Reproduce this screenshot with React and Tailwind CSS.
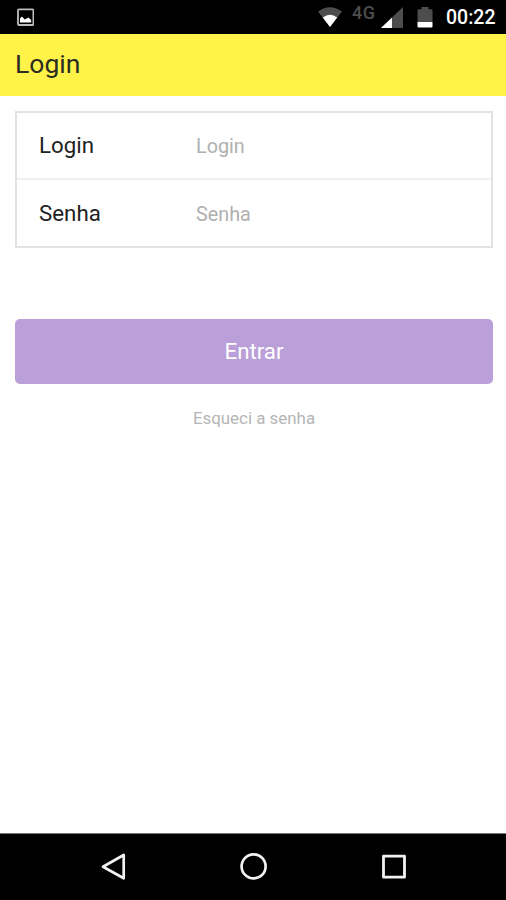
import { useState } from "react";

const fields = [
  { name: "login", label: "Login", type: "text" },
  { name: "senha", label: "Senha", type: "password" },
];

function StatusBar() {
  return (
    <div className="flex h-[34px] shrink-0 items-center bg-black pl-[17px] pr-[10.5px]">
      <svg className="h-[18px] w-[17px]" viewBox="0 0 17 18">
        <rect x="1" y="1.4" width="15.4" height="15.6" rx="1" fill="none" stroke="#bdbdbd" strokeWidth="1.8" />
        <path d="M3 14.6V10.6L5 8.6l2.7 2.8L11.4 9.6l2.8 2.4v2.6z" fill="#fff" />
      </svg>

      <svg className="ml-auto h-5 w-6" viewBox="0 0 24 20">
        <path d="M0 4.5Q12-4 24 4.5L12 20z" fill="#4d4d4d" />
        <path d="M4.8 10.4Q12 5 19.2 10.4L12 20z" fill="#fff" />
      </svg>

      <span className="ml-[10px] w-6 -translate-y-1 text-[18px] font-medium leading-none tracking-[0.5px] text-[#4d4d4d]">
        4G
      </span>

      <svg className="ml-[5px] h-[21px] w-[22px]" viewBox="0 0 22 21">
        <path d="M0 21L22 0V21z" fill="#4d4d4d" />
        <path d="M0 21L11 10.5V21z" fill="#fff" />
      </svg>

      <svg className="ml-[14px] h-[21px] w-4" viewBox="0 0 16 21">
        <path d="M.5 3.5Q.5 2.3 1.7 2.3H4.5V0h7v2.3h2.8q1.2 0 1.2 1.2V15H.5z" fill="#4d4d4d" />
        <path d="M.5 15h15v4.5q0 1-1 1h-13q-1 0-1-1z" fill="#fff" />
      </svg>

      <span className="ml-[13px] translate-y-px text-[19.5px] font-medium leading-none text-white">00:22</span>
    </div>
  );
}

function NavBar() {
  return (
    <div className="flex h-[67px] shrink-0 items-center justify-between border-t border-[#777] bg-black px-[100px]">
      <svg className="h-7 w-7" viewBox="0 0 28 28" fill="none" stroke="#f2f2f2" strokeWidth="2.7" strokeLinejoin="round">
        <path d="M3 13.7L23.7 2V25.3z" />
      </svg>
      <svg className="h-7 w-7" viewBox="0 0 28 28" fill="none" stroke="#f2f2f2" strokeWidth="2.7">
        <circle cx="14.6" cy="13.4" r="12" />
      </svg>
      <svg className="h-7 w-7" viewBox="0 0 28 28" fill="none" stroke="#f2f2f2" strokeWidth="2.8" strokeLinejoin="round">
        <rect x="5.5" y="3.2" width="21" height="21" />
      </svg>
    </div>
  );
}

export default function App() {
  const [values, setValues] = useState({ login: "", senha: "" });

  const handleChange = (e) => {
    setValues((prev) => ({ ...prev, [e.target.name]: e.target.value }));
  };

  return (
    <div className="flex h-screen flex-col bg-white font-[Roboto,sans-serif]">
      <StatusBar />

      <header className="flex h-[62px] shrink-0 items-center bg-[#fff34a] px-[15px] pb-[2px]">
        <h1 className="text-[26.5px] leading-none text-[#2b2c22]">Login</h1>
      </header>

      <form className="flex flex-1 flex-col pl-[15px] pr-[13px] pt-[15px]" onSubmit={(e) => e.preventDefault()}>
        <div className="h-[137px] divide-y-2 divide-[#efefef] border-2 border-[#e2e2e2]">
          {fields.map((field) => (
            <label key={field.name} className="flex h-[67px] items-center pl-[22px]">
              <span className="w-[157px] pt-px text-[22.3px] text-[#222]">{field.label}</span>
              <input
                className="w-60 bg-transparent pt-[3px] text-[19.8px] outline-none placeholder:text-[#b0b0b0]"
                name={field.name}
                type={field.type}
                placeholder={field.label}
                value={values[field.name]}
                onChange={handleChange}
              />
            </label>
          ))}
        </div>

        <button type="submit" className="mt-[71px] h-[65px] rounded-[5px] bg-[#bb9fd8] text-[22.3px] text-white">
          Entrar
        </button>

        <a href="#" className="mt-[22px] self-center text-[16.9px] leading-6 text-[#b5b5b5]">
          Esqueci a senha
        </a>
      </form>

      <NavBar />
    </div>
  );
}
